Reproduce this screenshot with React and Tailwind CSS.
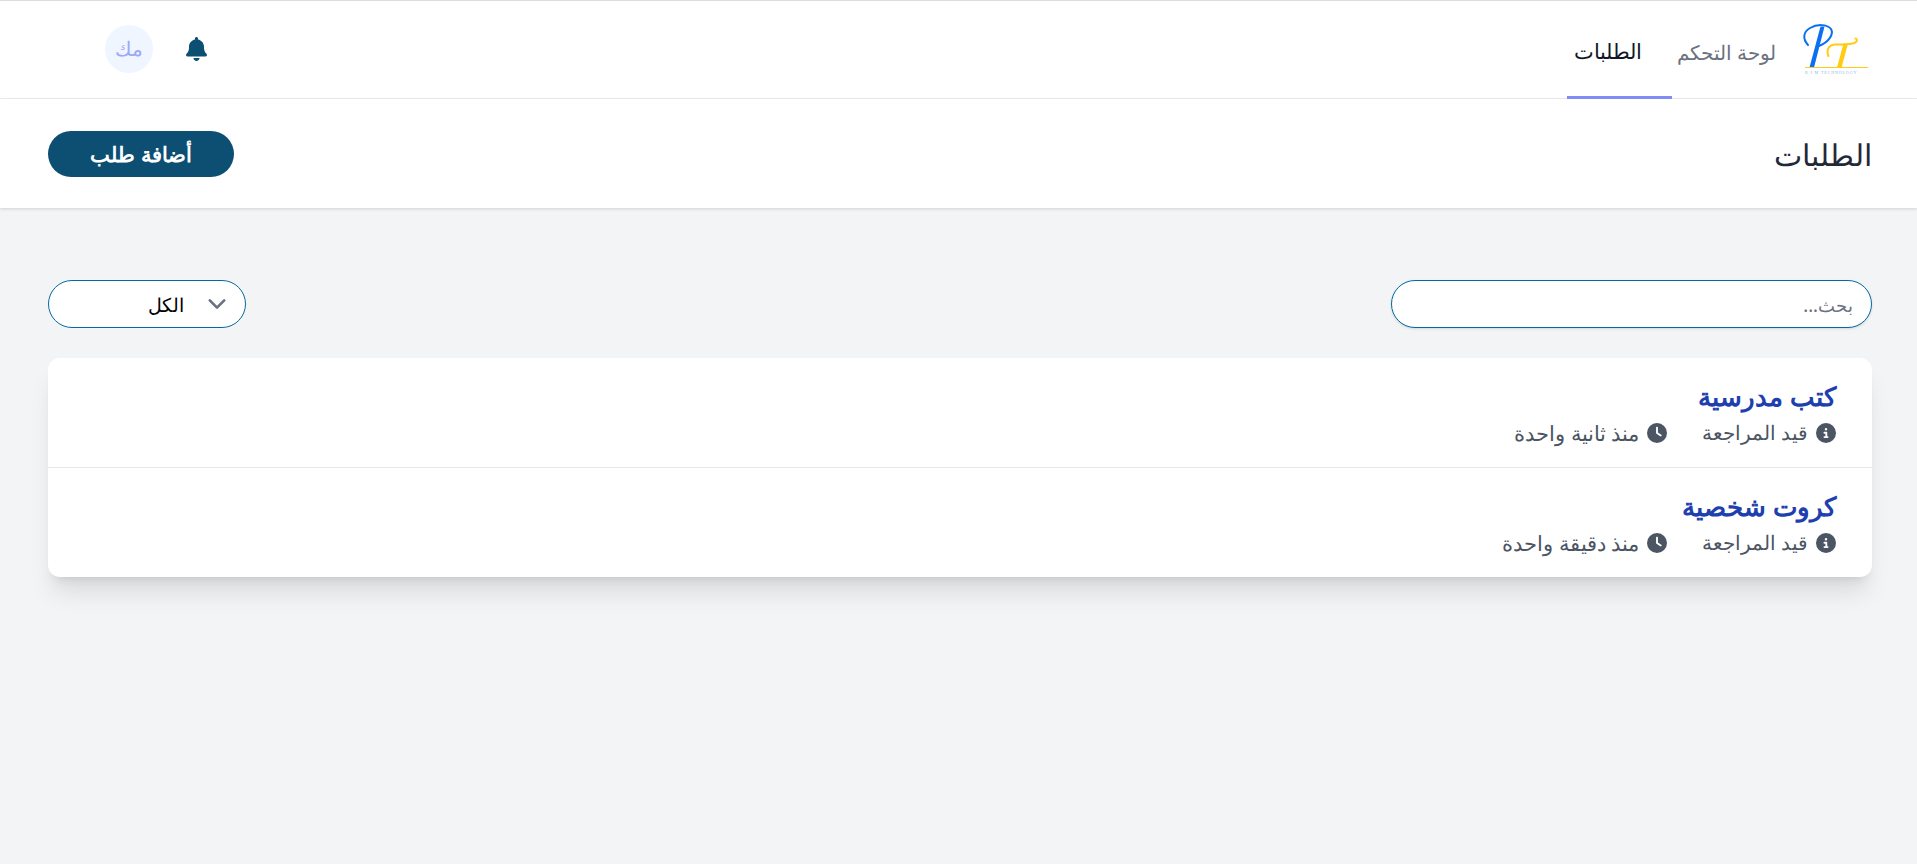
import React from "react";

function Logo() {
  return (
    <svg dir="ltr" width="70" height="54" viewBox="0 0 70 54" className="block">
      <path d="M6 22C0.5 16 1 9 8 5C15 1 25 1 29 6C32 11 27 19 17 23" fill="none" stroke="#0b6ff2" strokeWidth="2" strokeLinecap="round" />
      <path d="M18.5 3.5L7.5 44.5L12 44.5L22.5 3.5Z" fill="#0b6ff2" />
      <path d="M26.5 33C24 27 26.5 22 33 21.5C40 21 50 22.5 54 19C55.5 17.5 55 16 53.5 15.5" fill="none" stroke="#ffcc12" strokeWidth="2" strokeLinecap="round" />
      <path d="M41.5 20.5L35 44.5L39.5 44.5L46 20.5Z" fill="#ffcc12" />
      <rect x="3" y="44" width="63" height="1" fill="#ffcc12" />
      <text x="3" y="50.5" textAnchor="start" direction="ltr" fontFamily="Liberation Serif" fontSize="4" letterSpacing="0.9" fill="#8db4e8">R I M TECHNOLOGY</text>
    </svg>
  );
}

function Bell() {
  return (
    <svg viewBox="0 0 448 512" className="w-[21px] h-[24px] text-[#0d4f73]" fill="currentColor">
      <path d="M224 0c-17.7 0-32 14.3-32 32v19.2C119 66 64 130.6 64 208v18.8c0 47-17.3 92.4-48.5 127.6l-7.4 8.3c-8.4 9.4-10.4 22.9-5.3 34.4S19.4 416 32 416h384c12.6 0 24-7.4 29.2-18.9s3.1-25-5.3-34.4l-7.4-8.3C401.3 319.2 384 273.9 384 226.8V208c0-77.4-55-142-128-156.8V32c0-17.7-14.3-32-32-32zm45.3 493.3c12-12 18.7-28.3 18.7-45.3H160c0 17 6.7 33.3 18.7 45.3S207 512 224 512s33.3-6.7 45.3-18.7z" />
    </svg>
  );
}

function InfoIcon() {
  return (
    <svg viewBox="0 0 512 512" className="w-[20px] h-[20px] shrink-0" fill="#4b5563">
      <path d="M256 512A256 256 0 1 0 256 0a256 256 0 1 0 0 512zM216 336h24v-64h-24c-13.3 0-24-10.7-24-24s10.7-24 24-24h48c13.3 0 24 10.7 24 24v88h8c13.3 0 24 10.7 24 24s-10.7 24-24 24h-80c-13.3 0-24-10.7-24-24s10.7-24 24-24zm40-208a32 32 0 1 1 0 64 32 32 0 1 1 0-64z" />
    </svg>
  );
}

function ClockIcon() {
  return (
    <svg viewBox="0 0 512 512" className="w-[20px] h-[20px] shrink-0" fill="#4b5563">
      <path d="M256 0a256 256 0 1 1 0 512A256 256 0 1 1 256 0zm-24 120v136c0 8 4 15.5 10.7 20l96 64c11 7.4 25.9 4.4 33.3-6.7s4.4-25.9-6.7-33.3L280 243.2V120c0-13.3-10.7-24-24-24s-24 10.7-24 24z" />
    </svg>
  );
}

function Row({ title, time, border }) {
  return (
    <div className={"px-9 pt-[20px] " + (border ? "h-[110px] border-b border-[#e5e7eb]" : "h-[109px]")}>
      <div className="text-[26px] leading-[36px] font-semibold text-[#1e40af]">{title}</div>
      <div className="flex items-center mt-[4px] leading-[30px] text-[#4b5563]">
        <div className="flex items-center gap-[8px] w-[169px]">
          <InfoIcon />
          <span className="text-[20px]">قيد المراجعة</span>
        </div>
        <div className="flex items-center gap-[8px]">
          <ClockIcon />
          <span className="text-[21px]">{time}</span>
        </div>
      </div>
    </div>
  );
}

export default function App() {
  return (
    <div dir="rtl" className="min-h-[864px] bg-[#f3f4f6] font-['Noto_Sans',sans-serif]">
      <nav className="h-[99px] bg-white border-t border-t-[#dddddd] border-b border-b-[#eeeeee] flex justify-between pr-[45px] pl-[105px]">
        <div className="flex h-[98px]">
          <div className="flex items-center ml-[16px] w-[70px]"><Logo /></div>
          <div className="w-[114px] flex items-center justify-start pr-[10px] pt-[6px] text-[20px] text-[#6b7280] whitespace-nowrap">لوحة التحكم</div>
          <div className="w-[105px] flex items-center justify-start pr-[30px] pt-[6px] text-[21px] text-[#111827] border-b-[3px] border-[#818cf8]">الطلبات</div>
        </div>
        <div className="flex items-center gap-[33px] self-stretch pb-[1px]">
          <Bell />
          <div className="w-[48px] h-[48px] rounded-full bg-[#eff6ff] text-[#9ca8fc] text-[20px] flex items-center justify-center">مك</div>
        </div>
      </nav>

      <header className="h-[109px] bg-white shadow-[0_1px_3px_rgba(0,0,0,0.15)] pr-[45px] pl-[48px] flex items-center justify-between">
        <h1 className="text-[30px] font-medium text-[#1f2937] pt-[2px]">الطلبات</h1>
        <button className="w-[186px] h-[46px] rounded-full bg-[#0d4f73] text-white text-[21px] font-semibold flex items-center justify-center pt-[2px]">أضافة طلب</button>
      </header>

      <main className="pr-[45px] pl-[48px] pt-[72px]">
        <div className="flex justify-between items-center">
          <div className="w-[481px] h-[48px] rounded-full bg-white border border-[#0369a1] shadow-sm flex items-center px-[18px] pt-[2px] text-[18px] font-medium text-[#6b7280]">بحث...</div>
          <div className="w-[198px] h-[48px] rounded-full bg-white border border-[#0369a1] flex items-center pr-[10px] text-[19px] text-black justify-start gap-[15px]">
            <svg viewBox="0 0 20 20" className="w-[36px] h-[36px] shrink-0" fill="none" stroke="#6b7280" strokeWidth="1.5" strokeLinecap="round" strokeLinejoin="round"><path d="M6 8l4 4 4-4" /></svg>
            <span className="pt-[2px]">الكل</span>
          </div>
        </div>
        <div className="mt-[30px] bg-white rounded-xl shadow-[0_20px_25px_-5px_rgba(0,0,0,0.1),0_8px_10px_-6px_rgba(0,0,0,0.1)]">
          <Row title="كتب مدرسية" time="منذ ثانية واحدة" border />
          <Row title="كروت شخصية" time="منذ دقيقة واحدة" />
        </div>
      </main>
    </div>
  );
}
